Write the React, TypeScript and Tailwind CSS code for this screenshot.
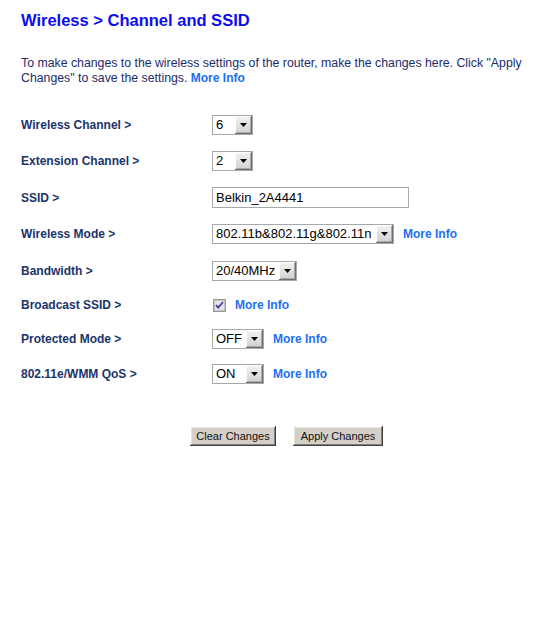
import React from "react";

const font = { fontFamily: '"Liberation Sans", Arial, sans-serif' };

function Arrow() {
  return (
    <span className="flex h-full w-[17px] items-center justify-center bg-gradient-to-b from-[#f4f4f4] to-[#cfcfcf] shadow-[inset_-1px_-1px_#6f6f6f,inset_1px_1px_#ffffff,inset_-2px_-2px_#a8a8a8]">
      <svg width="7" height="4" viewBox="0 0 7 4">
        <path d="M0 0H7L3.5 4Z" fill="#000" />
      </svg>
    </span>
  );
}

function Sel({ value, w }: { value: string; w: string }) {
  return (
    <div className={`flex h-[20px] ${w} border border-[#a5a9ad] bg-white`}>
      <span className="flex-1 overflow-hidden whitespace-nowrap pl-[3px] text-[13px] leading-[18px] text-black">
        {value}
      </span>
      <Arrow />
    </div>
  );
}

function MoreInfo() {
  return <span className="text-[12px] font-bold text-[#1d6ef6]">More Info</span>;
}

function Row({ label, h, children }: { label: string; h: string; children: React.ReactNode }) {
  return (
    <div className={`flex items-center ${h}`}>
      <div className="w-[191px] text-[12px] font-bold text-[#1b346a]">{label}</div>
      <div className="flex items-center gap-[9px]">{children}</div>
    </div>
  );
}

function Btn({ children, w }: { children: React.ReactNode; w: string }) {
  return (
    <button
      className={`h-[20px] ${w} bg-[#d4d0c8] text-[11px] text-[#101010] shadow-[inset_-1px_-1px_#404040,inset_1px_1px_#ffffff,inset_-2px_-2px_#808080,inset_2px_2px_#e6e3dc]`}
    >
      {children}
    </button>
  );
}

export default function App() {
  return (
    <div className="h-[630px] w-[548px] bg-white pt-[11px]" style={font}>
      <div className="pl-[21px]">
        <div className="text-[16.5px] font-bold leading-[19px] text-[#0d0df2]">
          Wireless &gt; Channel and SSID
        </div>
        <p className="mt-[26px] w-[518px] text-[12.3px] leading-[15px] text-[#1b2b6b]">
          To make changes to the wireless settings of the router, make the changes here. Click "Apply
          Changes" to save the settings. <MoreInfo />
        </p>
        <div className="mt-[21px] flex flex-col">
          <Row label="Wireless Channel >" h="h-[36px]">
            <Sel value="6" w="w-[41px]" />
          </Row>
          <Row label="Extension Channel >" h="h-[36px]">
            <Sel value="2" w="w-[41px]" />
          </Row>
          <Row label="SSID >" h="h-[37px]">
            <div className="flex h-[21px] w-[197px] items-center border border-[#a5a9ad] bg-white pl-[3px] text-[13px] text-black">
              Belkin_2A4441
            </div>
          </Row>
          <Row label="Wireless Mode >" h="h-[36px]">
            <Sel value="802.11b&802.11g&802.11n" w="w-[182px]" />
            <MoreInfo />
          </Row>
          <Row label="Bandwidth >" h="h-[38px]">
            <Sel value="20/40MHz" w="w-[85px]" />
          </Row>
          <Row label="Broadcast SSID >" h="h-[30px]">
            <span className="ml-[1px] block h-[13px] w-[13px]">
              <svg width="13" height="13" viewBox="0 0 13 13">
                <rect x="0.5" y="0.5" width="12" height="12" fill="#dcdcdc" stroke="#9a9a9a" />
                <rect x="1.5" y="1.5" width="10" height="10" fill="#e4e4e4" stroke="#c4c4c4" />
                <path d="M3 6.2L5.2 8.6L10 3" fill="none" stroke="#3e3eb0" strokeWidth="1.8" />
              </svg>
            </span>
            <MoreInfo />
          </Row>
          <Row label="Protected Mode >" h="h-[37px]">
            <Sel value="OFF" w="w-[52px]" />
            <MoreInfo />
          </Row>
          <Row label="802.11e/WMM QoS >" h="h-[33px]">
            <Sel value="ON" w="w-[52px]" />
            <MoreInfo />
          </Row>
        </div>
      </div>
      <div className="mt-[36px] flex justify-center gap-[17px] pl-[25px]">
        <Btn w="w-[86px]">Clear Changes</Btn>
        <Btn w="w-[90px]">Apply Changes</Btn>
      </div>
    </div>
  );
}
